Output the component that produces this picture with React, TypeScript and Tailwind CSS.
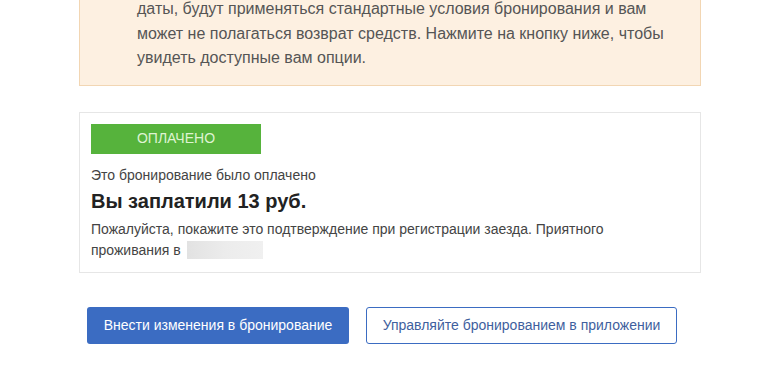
export default function App() {
  return (
    <div className="w-[761px] h-[368px] overflow-hidden bg-white font-['Liberation_Sans',Arial,sans-serif]">
      <div className="ml-[79px] w-[622px]">
        {/* cancellation notice (scrolled) */}
        <div className="-mt-[4px] border border-[#f2d6b3] bg-[#fdf0e1] pl-[57px] pr-4 pb-[14px] text-[16px] leading-[24.5px] text-[#555]">
          даты, будут применяться стандартные условия бронирования и вам
          <br />
          может не полагаться возврат средств. Нажмите на кнопку ниже, чтобы
          <br />
          увидеть доступные вам опции.
        </div>

        {/* payment card */}
        <div className="mt-[26px] h-[161px] border border-[#e6e6e6] px-[11px] pt-[11px]">
          <div className="flex h-[30px] w-[170px] items-center justify-center bg-[#56b33c] text-[14px] text-[#dff3d2]">
            ОПЛАЧЕНО
          </div>
          <div className="mt-[13px] text-[14px] leading-[16px] text-[#444]">Это бронирование было оплачено</div>
          <div className="mt-[5px] text-[20px] font-bold leading-[26px] text-[#222]">Вы заплатили 13 руб.</div>
          <div className="mt-[5px] text-[14px] leading-[21px] text-[#444]">
            Пожалуйста, покажите это подтверждение при регистрации заезда. Приятного
            <br />
            <span className="inline-flex items-center">
              проживания в
              <span className="ml-[6px] inline-block h-[18px] w-[76px] bg-gradient-to-r from-[#e2e2e2] via-[#ececec] to-[#f0f0f0]" />
            </span>
          </div>
        </div>

        {/* actions */}
        <div className="mt-[34px] ml-[8px] flex gap-[17px]">
          <button className="flex h-[37px] w-[262px] items-center justify-center rounded-[3px] bg-[#3b6cc2] text-[14px] text-white">
            Внести изменения в бронирование
          </button>
          <button className="flex h-[37px] w-[311px] items-center justify-center rounded-[3px] border border-[#3b6cc2] bg-white text-[14px] text-[#3f5f9e]">
            Управляйте бронированием в приложении
          </button>
        </div>
      </div>
    </div>
  );
}
